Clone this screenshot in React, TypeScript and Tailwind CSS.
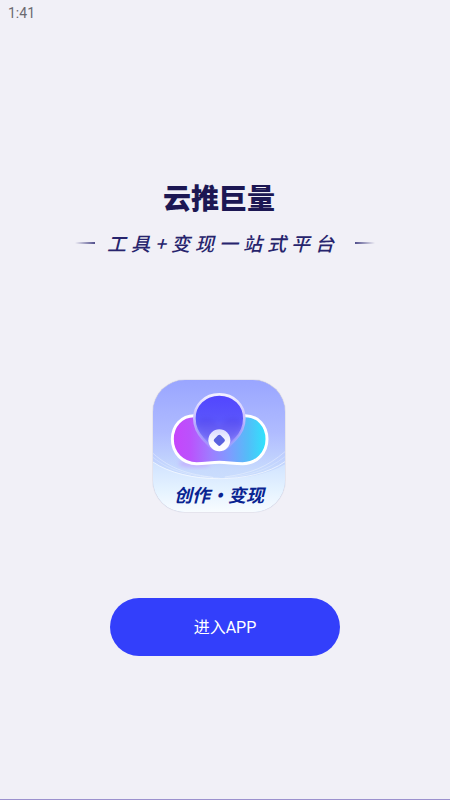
function CloudArt() {
  return (
    <svg
      viewBox="10 17 396 396"
      className="col-start-1 row-start-1 h-full w-full"
      aria-hidden="true"
    >
      <defs>
        <linearGradient id="sky" x1="0" y1="0" x2="0" y2="1">
          <stop offset="0" stopColor="#99a5ff" />
          <stop offset="0.4" stopColor="#b0bcff" />
          <stop offset="0.68" stopColor="#c7dafd" />
          <stop offset="1" stopColor="#d9ebff" />
        </linearGradient>
        <linearGradient id="ground" x1="0" y1="0" x2="0" y2="1">
          <stop offset="0" stopColor="#d0e2ff" />
          <stop offset="0.55" stopColor="#e4f2ff" />
          <stop offset="1" stopColor="#f8fcff" />
        </linearGradient>
        <linearGradient id="cloud" x1="70" y1="0" x2="350" y2="0" gradientUnits="userSpaceOnUse">
          <stop offset="0" stopColor="#c646fb" />
          <stop offset="0.18" stopColor="#bb51fc" />
          <stop offset="0.42" stopColor="#9c80ff" />
          <stop offset="0.6" stopColor="#7f9bff" />
          <stop offset="0.8" stopColor="#54bcf8" />
          <stop offset="1" stopColor="#2fe4fc" />
        </linearGradient>
        <linearGradient id="bulb" x1="0" y1="0" x2="0" y2="1">
          <stop offset="0" stopColor="#5145ff" />
          <stop offset="0.45" stopColor="#5a55fb" />
          <stop offset="0.75" stopColor="#7d78fb" />
          <stop offset="1" stopColor="#a9a4ff" />
        </linearGradient>
        <linearGradient id="rim" x1="0" y1="0" x2="0" y2="1">
          <stop offset="0" stopColor="#f2f0ff" />
          <stop offset="0.35" stopColor="#cdc6ff" />
          <stop offset="0.7" stopColor="#b5acff" stopOpacity="0.8" />
          <stop offset="1" stopColor="#b5acff" stopOpacity="0.3" />
        </linearGradient>
        <linearGradient id="coin" x1="0" y1="0" x2="0" y2="1">
          <stop offset="0" stopColor="#d9daff" />
          <stop offset="0.6" stopColor="#fafaff" />
          <stop offset="1" stopColor="#ffffff" />
        </linearGradient>
        <filter id="soft" x="-20%" y="-20%" width="140%" height="140%">
          <feGaussianBlur stdDeviation="6" />
        </filter>
      </defs>
      <rect x="10" y="17" width="396" height="396" fill="url(#sky)" />
      <path d="M10 263C100 322 300 334 406 270V413H10Z" fill="url(#ground)" />
      <g fill="none" stroke="#fff">
        <path d="M10 263C105 329 310 331 406 262" strokeWidth="3" opacity="0.6" />
        <path d="M10 237C65 286 120 300 190 309" strokeWidth="3" opacity="0.35" />
        <path d="M10 249C65 294 130 306 210 311" strokeWidth="2" opacity="0.35" />
        <path d="M406 232C352 278 305 297 225 308" strokeWidth="3" opacity="0.35" />
        <path d="M406 247C352 288 305 302 225 311" strokeWidth="2" opacity="0.35" />
      </g>
      <ellipse cx="135" cy="268" rx="48" ry="12" fill="#c493ff" opacity="0.5" filter="url(#soft)" />
      <path
        d="M134 124C95 124 68 155 68 194C68 236 99 268 141 268C168 268 184 264 209 264C234 264 250 268 279 268C321 268 352 236 352 194C352 155 325 124 286 124Z"
        fill="url(#cloud)"
        stroke="#fff"
        strokeWidth="9"
      />
      <path
        d="M209 60C165 60 134 92 134 132C134 157 145 178 160 194L181 216C196 231 222 231 237 216L258 194C274 178 284 157 284 132C284 92 253 60 209 60Z"
        fill="url(#bulb)"
        stroke="url(#rim)"
        strokeWidth="8"
      />
      <path
        d="M142 148C155 120 190 128 209 157C228 128 263 120 276 148C272 170 248 197 233 207H185C168 195 146 170 142 148Z"
        fill="#4a35dc"
        opacity="0.22"
        filter="url(#soft)"
      />
      <circle cx="209" cy="198" r="33" fill="url(#coin)" />
      <path
        d="M205 183Q209 179 213 183L224 194Q228 198 224 202L213 213Q209 217 205 213L194 202Q190 198 194 194Z"
        fill="#5961de"
      />
    </svg>
  );
}

export default function App() {
  return (
    <div className="flex min-h-screen flex-col border-b border-[#9b91ce] bg-[#f1f0f7] font-['Roboto','Noto_Sans_CJK_SC',sans-serif]">
      <header className="px-2 pt-1 text-sm leading-[18px] text-[#6b6a70]">
        <time>1:41</time>
      </header>

      <main className="flex flex-1 flex-col items-center pt-[155px]">
        <h1 className="pr-3 font-['Noto_Sans_CJK_SC',sans-serif] text-[28px] leading-10 font-black text-[#1c1753]">
          云推巨量
        </h1>

        <div className="mt-1 flex items-center gap-3">
          <span className="h-0.5 w-5 bg-linear-to-r from-transparent to-[#514e8b]" />
          <p className="pr-1 font-['Noto_Sans_CJK_SC',sans-serif] text-[19px] leading-[44px] font-medium tracking-[5px] whitespace-nowrap text-[#27246d] italic">
            工具+变现一站式平台
          </p>
          <span className="h-0.5 w-5 bg-linear-to-r from-[#514e8b] to-transparent" />
        </div>

        <div className="mt-[115px] mr-3 grid size-[132px] overflow-hidden rounded-[32px] shadow-[0_0_1px_#777799]">
          <CloudArt />
          <p className="col-start-1 row-start-1 self-end pb-1 text-center font-['Noto_Sans_CJK_SC',sans-serif] text-lg leading-7 font-bold text-[#092391] italic">
            创作·变现
          </p>
        </div>

        <button
          type="button"
          className="mt-[86px] h-[58px] w-[51.3%] rounded-full bg-[#333ffb] pt-0.5 text-base text-white"
        >
          进入APP
        </button>
      </main>
    </div>
  );
}
